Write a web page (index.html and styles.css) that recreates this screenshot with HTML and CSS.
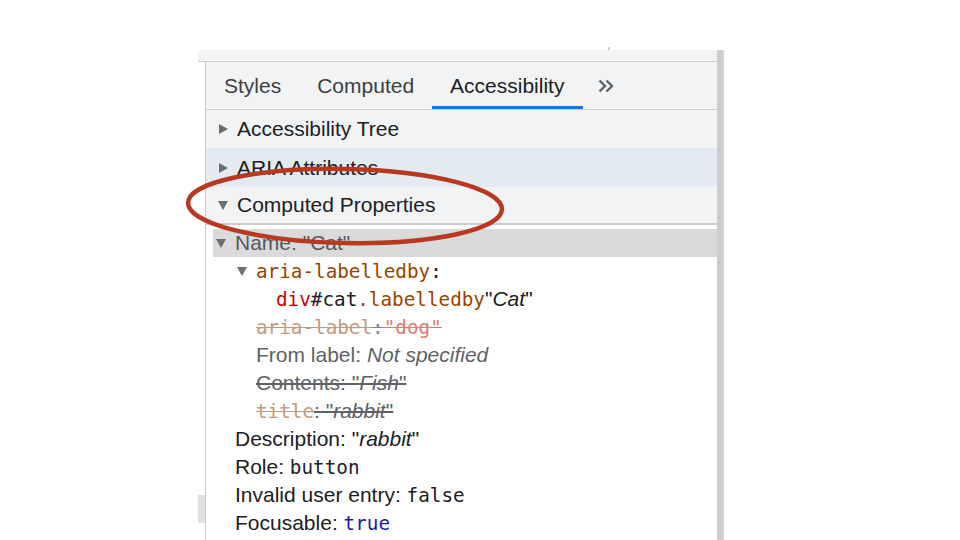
FILE: index.html
```html
<!DOCTYPE html>
<html>
<head>
<meta charset="utf-8">
<link rel="stylesheet" href="styles.css">
</head>
<body>
<div class="frame">
  <div class="main">
    <div class="topstrip"><span class="tick"></span></div>
    <div class="body">
      <div class="gutter"><div class="gutter-block"></div></div>
      <div class="panel">
        <div class="tabs">
          <div class="tab">Styles</div>
          <div class="tab">Computed</div>
          <div class="tab active">Accessibility</div>
          <div class="tab more"><svg width="16" height="14" viewBox="0 0 16 14"><path d="M1.5 1.5 L7 7 L1.5 12.5 M8.5 1.5 L14 7 L8.5 12.5" fill="none" stroke="#5f6368" stroke-width="2.4"/></svg></div>
        </div>
        <div class="section"><span class="tri right"></span>Accessibility Tree</div>
        <div class="section hover"><span class="tri right"></span>ARIA Attributes</div>
        <div class="section open"><span class="tri down"></span>Computed Properties</div>
        <div class="props">
          <div class="line name-row"><span class="tri down small"></span>Name: "Cat"</div>
          <div class="line ind2"><span class="tri down small"></span><span class="mono attr">aria-labelledby</span><span class="mono">:</span></div>
          <div class="line ind3"><span class="mono tag">div</span><span class="mono">#cat</span><span class="mono attr">.labelledby</span>"<i>Cat</i>"</div>
          <div class="line ind1 strike faded-attr"><span class="mono">aria-label</span><span class="mono colon">:</span><span class="mono faded-val">"dog"</span></div>
          <div class="line ind1 gray">From label: <i>Not specified</i></div>
          <div class="line ind1 gray strike">Contents: "<i>Fish</i>"</div>
          <div class="line ind1 strike"><span class="mono faded-attr">title</span><span class="gray">: "<i>rabbit</i>"</span></div>
          <div class="line ind0">Description: "<i>rabbit</i>"</div>
          <div class="line ind0">Role: <span class="mono">button</span></div>
          <div class="line ind0">Invalid user entry: <span class="mono">false</span></div>
          <div class="line ind0">Focusable: <span class="mono blue">true</span></div>
        </div>
      </div>
    </div>
  </div>
  <div class="scrollbar"></div>
</div>
<svg class="annot" width="960" height="540" viewBox="0 0 960 540">
  <ellipse cx="345" cy="206" rx="157" ry="37" fill="none" stroke="#b8391f" stroke-width="4.5" transform="rotate(1.2 345 206)"/>
</svg>
</body>
</html>
```

FILE: styles.css
```css
html, body {
  margin: 0;
  padding: 0;
  background: #ffffff;
}
body {
  width: 960px;
  height: 540px;
  overflow: hidden;
  position: relative;
  font-family: "Liberation Sans", Arial, sans-serif;
  font-size: 21px;
  color: #202124;
}
.frame {
  display: flex;
  margin-left: 198px;
  padding-top: 50px;
  width: 526px;
  height: 490px;
}
.main {
  width: 520px;
  display: flex;
  flex-direction: column;
}
.topstrip {
  height: 11px;
  background: #f1f3f4;
  border-bottom: 1px solid #cbcdd1;
  position: relative;
}
.tick {
  position: absolute;
  left: 410px;
  top: -3px;
  width: 2px;
  height: 3px;
  background: #d0d0d0;
}
.body {
  flex: 1;
  display: flex;
}
.gutter {
  width: 7px;
  display: flex;
  flex-direction: column;
}
.gutter-block {
  margin-top: 433px;
  height: 28px;
  background: #e1e1e1;
}
.panel {
  flex: 1;
  border-left: 1px solid #c9cbcf;
  display: flex;
  flex-direction: column;
}
.tabs {
  height: 47px;
  background: #f1f3f4;
  border-bottom: 1px solid #cbcdd1;
  display: flex;
}
.tab {
  padding: 0 18px;
  display: flex;
  align-items: center;
  color: #3c4043;
  position: relative;
}
.tab.active {
  color: #202124;
  padding: 0 19px 0 18px;
}
.tab.active::after {
  content: "";
  position: absolute;
  left: 0;
  right: 0;
  bottom: 0;
  height: 3px;
  background: #1a73e8;
}
.tab.more {
  padding-left: 15px;
  padding-top: 1px;
}
.section {
  height: 38px;
  background: #f1f3f4;
  display: flex;
  align-items: center;
  padding-left: 12px;
  color: #202124;
}
.section.hover {
  background: #e4eaf1;
  height: 39px;
}
.section.open {
  height: 36px;
  border-bottom: 2px solid #cbcdd1;
}
.tri {
  display: inline-block;
  width: 0;
  height: 0;
  margin-right: 9px;
}
.tri.right {
  border-top: 5px solid transparent;
  border-bottom: 5px solid transparent;
  border-left: 9px solid #6e6e6e;
  margin-left: 1px;
}
.tri.down {
  border-left: 5.5px solid transparent;
  border-right: 5.5px solid transparent;
  border-top: 9px solid #6e6e6e;
}
.tri.small {
  margin-right: 9px;
}
.props {
  padding-top: 4px;
  background: #ffffff;
}
.line {
  height: 28px;
  display: flex;
  align-items: center;
  white-space: pre;
}
.name-row {
  background: #dadada;
  margin-left: 7px;
  padding-left: 3px;
  color: #55595e;
}
.ind0 { padding-left: 29px; }
.ind1 { padding-left: 50px; }
.ind2 { padding-left: 31px; }
.ind3 { padding-left: 70px; }
.mono {
  font-family: "DejaVu Sans Mono", Menlo, monospace;
  font-size: 19.3px;
}
.attr { color: #994500; }
.tag { color: #c80000; }
.blue { color: #1a1aa6; }
.gray { color: #5f6368; }
.faded-attr { color: #c29b7c; }
.faded-val { color: #e27a72; }
.colon { color: #80868b; }
.strike { text-decoration: line-through; }
.strike span { text-decoration: line-through; }
.annot {
  position: absolute;
  left: 0;
  top: 0;
  pointer-events: none;
}
.scrollbar {
  width: 6px;
  background: #cdcdcd;
  border-right: 1px solid #dadada;
}
```
